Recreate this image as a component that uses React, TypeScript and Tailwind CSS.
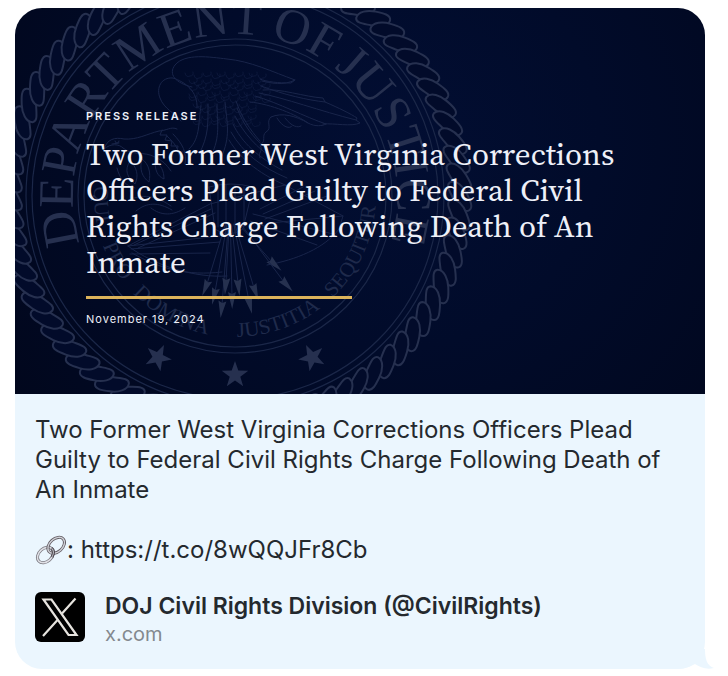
const STRAND_COUNT = 76;

const arrows = [
  [-28, 88],
  [-20, 96],
  [-13, 109],
  [-9, 86],
  [-3, 100],
  [3, 87],
  [14, 105],
  [19, 92],
  [37, 66],
  [49, 86],
];

const ringWords = [
  { id: "department", text: "DEPARTMENT", offset: "36.4%" },
  { id: "of", text: "OF", offset: "56.6%" },
  { id: "justice", text: "JUSTICE", offset: "70%" },
];

const mottoWords = [
  { id: "qui", text: "QUI", offset: "26%" },
  { id: "pro", text: "PRO", offset: "33%" },
  { id: "domina", text: "DOMINA", offset: "42%" },
  { id: "justitia", text: "JUSTITIA", offset: "55.3%" },
  { id: "sequitur", text: "SEQUITUR", offset: "68%" },
];

const stars = [25.5, 0, -25.5];

function Feathers() {
  const scales = [];
  for (let row = 0; row < 9; row++) {
    const cols = row < 5 ? 10 : 8;
    for (let col = 0; col < cols; col++) {
      const x = -50 + col * 8 + ((row * 3 + col) % 4) + row;
      const y = -123 + row * 6 + ((col * 2 + row) % 4);
      scales.push(<path key={`${row}-${col}`} d={`M${x} ${y}q1 5 5 3q4 0 3 -4`} />);
    }
  }
  return <g strokeWidth="0.5">{scales}</g>;
}

function Eagle() {
  return (
    <g fill="none" stroke="#19254a" strokeWidth="1" strokeLinecap="round" strokeLinejoin="round">
      {/* wings */}
      <path d="M-38 -88C-37 -105 -50 -114 -62 -118C-74 -119 -79 -108 -75 -98C-71 -87 -60 -83 -54 -75" />
      <path d="M-43 -109C-60 -113 -67 -122 -60 -131C-50 -143 -25 -139 -8 -137C15 -135 38 -124 60 -116L56 -113C43 -113 32 -114 25 -117" />
      <path d="M28 -106C45 -108 70 -99 88 -98L90 -94C104 -88 116 -82 122 -78L121 -76L125 -73C116 -69 100 -73 88 -72" />
      <path d="M26 -110C50 -101 72 -96 90 -94M24 -103C50 -98 85 -85 121 -76M20 -100C44 -93 70 -79 91 -72" />
      <path d="M60 -116C49 -110 35 -113 27 -115M15 -94C36 -92 62 -81 73 -73C80 -69 88 -70 91 -72M36 -79C47 -84 61 -80 73 -73" />
      <path d="M36 -79C30 -74 38 -68 31 -64C26 -60 32 -55 25 -51C29 -45 22 -43 25 -38M42 -78C48 -68 55 -67 57 -70M50 -78C57 -69 63 -68 66 -70" />
      <path d="M1 -95C6 -80 15 -66 25 -55M2 -88C8 -72 18 -58 31 -48M0 -80C9 -62 22 -48 39 -37M-2 -72C6 -54 24 -38 47 -26M-4 -64C8 -43 26 -29 52 -18M-6 -56C6 -36 27 -20 55 -9" />
      <path d="M-34 -90C-37 -75 -34 -58 -46 -47M-27 -92C-27 -74 -26 -60 -36 -42M-18 -92C-18 -74 -14 -60 -24 -40M-10 -94C-8 -72 -4 -60 -14 -38" />
      <Feathers />
      {/* head */}
      <path d="M-131 -47C-128 -57 -120 -59 -111 -57C-98 -56 -88 -62 -76 -65C-69 -65 -64 -70 -58 -67" />
      <path d="M-131 -47C-124 -53 -116 -52 -112 -48C-102 -40 -91 -45 -80 -39C-73 -36 -68 -31 -64 -25" />
      <path d="M-123 -52l7 -1M-120 -55a2 2 0 1 0 4 0" />
      <path d="M-73 -66l-2 5l7 0l-2 5l7 1l-1 5l7 0l-1 6l6 0M-68 -60c8 8 12 12 13 25M-62 -62c10 10 14 19 12 30" />
      {/* olive branch */}
      <path d="M-105 -35c-6 9 -3 16 5 23c4 -8 2 -17 -5 -23M-93 -37c-3 10 0 18 7 23c2 -9 0 -18 -7 -23M-80 -35c0 9 2 15 9 18c0 -8 -3 -14 -9 -18M-118 -28c3 12 9 18 18 20M-108 5c12 -6 25 -8 44 5M-99 15c11 -9 22 -9 36 -1M-84 12c10 8 22 8 34 0" />
      {/* shield and tail */}
      <path d="M-107 50L-25 8L50 -11L108 20L104 33C90 52 61 64 32 69M-107 50C-80 70 -40 82 -8 80M-101 49L-24 13M-97 52L-20 17M-103 57C-75 73 -48 80 -13 76" />
      <path d="M-107 50L-15 40M-104 53L-15 46M-105 58L-25 57M35 27L108 20M30 23L92 0M28 18L80 -5M25 13L68 -9M18 18L98 38M15 25L82 49" />
      <path d="M-26 -9L-20 33Q-7 43 8 33L18 -9Q-4 -15 -26 -9M-17 -10V31M-9 -11V37M0 -10V37M9 -9V31" />
      {/* arrows */}
      {arrows.map(([x, y]) => {
        const turn = (Math.atan2(y - 28, x + 4) * 180) / Math.PI - 90;
        return (
          <g key={`${x}-${y}`}>
            <path d={`M${-4 + x / 5} 28L${x} ${y}`} />
            <path
              d="M0 13L-4 -4L0 -2L4 -4Z"
              fill="#26314f"
              stroke="none"
              transform={`translate(${x} ${y}) rotate(${turn})`}
            />
          </g>
        );
      })}
    </g>
  );
}

function Seal() {
  return (
    <svg
      className="absolute top-0 left-0 h-full w-[690px]"
      viewBox="0 0 690 386"
      preserveAspectRatio="xMinYMid slice"
      aria-hidden="true"
    >
      <defs>
        <path id="ring" d="M0 162A162 162 0 0 1 0 -162A162 162 0 0 1 0 162" />
        <path id="motto" d="M0 -141A141 141 0 0 0 0 141A141 141 0 0 0 0 -141" />
      </defs>
      <g transform="translate(220 188)">
        <g fill="none" stroke="#1b2748" strokeWidth="1.2">
          <circle r="151" />
          <circle r="157" />
          <circle r="203" />
          <circle r="209" />
        </g>
        {/* rope border, each strand lies over the one before */}
        <g fill="#020b2a" stroke="#26304f" strokeWidth="2">
          {Array.from({ length: STRAND_COUNT }, (_, i) => (
            <path
              key={i}
              d="M-17 1C-16 -6 -6 -8 2 -7C10 -6 17 -5 17 0C17 6 7 8 -2 7C-10 6 -17 6 -17 1Z"
              transform={`rotate(${(i * 360) / STRAND_COUNT}) translate(0 -225) rotate(-33)`}
            />
          ))}
        </g>
        <Eagle />
        <g fill="#26304f" fontFamily="'Liberation Serif', serif" fontSize="50">
          {ringWords.map((word) => (
            <text key={word.id} textAnchor="middle">
              <textPath href="#ring" startOffset={word.offset}>{word.text}</textPath>
            </text>
          ))}
        </g>
        <g fill="#1f2a4b" fontFamily="'Liberation Serif', serif" fontSize="21">
          {mottoWords.map((word) => (
            <text key={word.id} textAnchor="middle">
              <textPath href="#motto" startOffset={word.offset}>{word.text}</textPath>
            </text>
          ))}
        </g>
        {stars.map((angle) => (
          <path
            key={angle}
            fill="#26304f"
            d="M0 -14L3.3 -4.5L13.3 -4.3L5.3 1.7L8.2 11.3L0 5.6L-8.2 11.3L-5.3 1.7L-13.3 -4.3L-3.3 -4.5Z"
            transform={`rotate(${angle}) translate(0 179)`}
          />
        ))}
      </g>
    </svg>
  );
}

function LinkIcon() {
  return (
    <svg className="h-[30px] w-8 shrink-0" viewBox="0 0 32 30" fill="none" role="img" aria-label="Link">
      <g transform="rotate(-42 16 15)">
        <ellipse cx="8.5" cy="15" rx="9" ry="6.5" stroke="#77757d" strokeWidth="3" />
        <ellipse cx="8.5" cy="15" rx="9" ry="6.5" stroke="#dfe0e6" strokeWidth="1.6" />
        <ellipse cx="23" cy="15" rx="9.500" ry="6.5" stroke="#5f5960" strokeWidth="3" />
        <ellipse cx="23" cy="15" rx="9.500" ry="6.5" stroke="#cfd0d6" strokeWidth="1.4" />
        <path d="M12 21C16 19.500 18 17 17.500 14" stroke="#4d474e" strokeWidth="3" />
        <path d="M12 21C16 19.500 18 17 17.500 14" stroke="#b9bac1" strokeWidth="1" />
      </g>
    </svg>
  );
}

function XLogo() {
  return (
    <svg className="h-[50px] w-[50px] shrink-0 rounded-md" viewBox="0 0 50 50" role="img" aria-label="X">
      <rect width="50" height="50" fill="#000" />
      <g fill="none" stroke="#e6e3de" strokeWidth="2.2">
        <path d="M8.500 7.500H16.500L41.500 43H33.500Z" />
        <path d="M40.500 6.500L27 21.500M22.500 28L8 44" />
      </g>
    </svg>
  );
}

function Hero() {
  return (
    <header className="relative overflow-hidden rounded-t-[27px] bg-[radial-gradient(circle_at_55%_35%,#020e33_0%,#010b2a_45%,#01071d_100%)]">
      <Seal />
      <div className="relative px-[71px] pt-[100px] pb-[67px] text-[#eef0f8]">
        <p className="font-[Inter,sans-serif] text-[11px] leading-4 font-semibold tracking-[2px]">PRESS RELEASE</p>
        <h1 className="mt-3 font-['Source_Serif_4','Liberation_Serif',serif] text-[31px] leading-9">
          Two Former West Virginia Corrections Officers Plead Guilty to Federal Civil Rights Charge Following Death of
          An Inmate
        </h1>
        <div className="mt-4 h-[3px] w-[266px] bg-[#dcb35b]" />
        <p className="mt-3 font-[Inter,sans-serif] text-[11px] leading-4 font-normal tracking-[1px]">
          November 19, 2024
        </p>
      </div>
    </header>
  );
}

export default function App() {
  return (
    <main className="min-h-screen bg-white pt-2 pr-[23px] pl-[15px] font-[Inter,sans-serif] text-[#24292e]">
      <article className="relative">
        <Hero />
        <div className="rounded-b-[27px] bg-[#ebf6fe] px-5 pt-[21px] pb-[21px] text-[24px] leading-[30px]">
          <p>
            Two Former West Virginia Corrections Officers Plead Guilty to Federal Civil Rights Charge Following Death
            of An Inmate
          </p>
          <p className="mt-[30px] flex items-center">
            <LinkIcon />
            <span className="whitespace-pre">: </span>
            <a href="https://t.co/8wQQJFr8Cb">https://t.co/8wQQJFr8Cb</a>
          </p>
          <footer className="mt-[27px] flex gap-5">
            <XLogo />
            <div>
              <p className="text-[23px] leading-7 font-semibold">DOJ Civil Rights Division (@CivilRights)</p>
              <p className="text-[20px] leading-7 text-[#83898f]">x.com</p>
            </div>
          </footer>
        </div>
        <svg className="absolute -right-[9px] bottom-0 h-5 w-10" viewBox="0 0 40 20" aria-hidden="true">
          <path fill="#ebf6fe" d="M31 0C31 10 33 17 40 19C32 21 26 18 21 15C14 19 9 20 0 20V0Z" />
        </svg>
      </article>
    </main>
  );
}
